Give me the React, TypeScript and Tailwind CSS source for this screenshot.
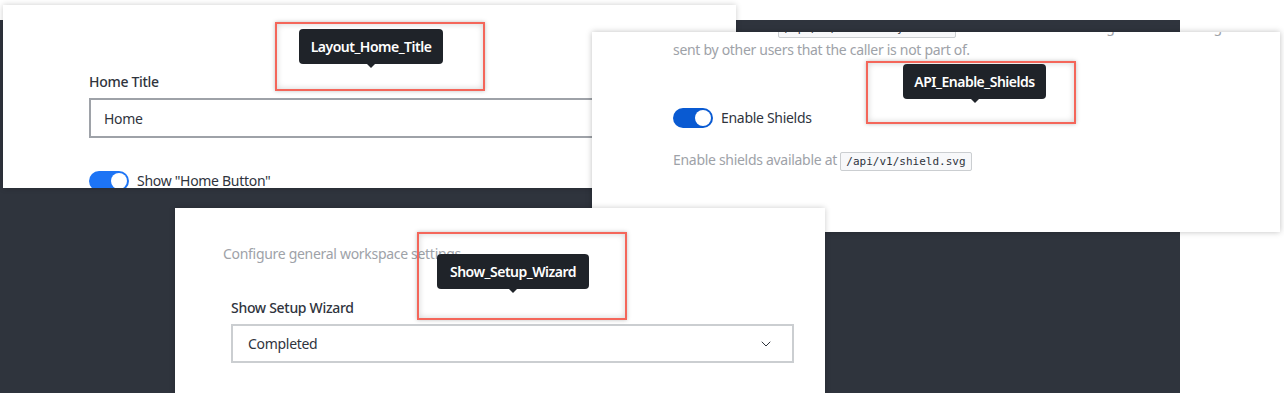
import { ChevronDown } from "lucide-react";

const FONT = "font-['Noto_Sans','Liberation_Sans',sans-serif] tracking-[-0.3px]";

function Toggle({ tone }: { tone: string }) {
  return (
    <span
      className={`flex h-5 w-10 shrink-0 items-center justify-end rounded-full px-[2px] ${tone}`}
    >
      <span className="size-4 rounded-full bg-white" />
    </span>
  );
}

function Code({ children }: { children: string }) {
  return (
    <code className="rounded-[2px] border border-[#cbced1] bg-[#f7f8fa] px-[5px] py-[2px] font-['DejaVu_Sans_Mono',monospace] text-[11px] font-medium tracking-normal text-[#2f343d]">
      {children}
    </code>
  );
}

// red annotation frame with the translation-key tooltip inside it
function KeyTag({
  label,
  className,
  boxClass,
}: {
  label: string;
  className: string;
  boxClass: string;
}) {
  return (
    <div
      className={`absolute w-[210px] border-2 border-[#f4665a] shadow-[0_0_4px_rgba(0,0,0,0.25),inset_0_0_6px_rgba(0,0,0,0.18)] ${className}`}
    >
      <div
        className={`relative flex h-[35px] items-center justify-center rounded-[4px] bg-[#1f2329] text-[14px] font-semibold tracking-[-0.5px] text-white ${boxClass}`}
      >
        {label}
        <span className="absolute -bottom-[4px] left-1/2 size-0 -translate-x-1/2 border-x-[5px] border-t-[5px] border-x-transparent border-t-[#1f2329]" />
      </div>
    </div>
  );
}

export default function App() {
  return (
    <div className={`relative h-[393px] w-[1284px] overflow-hidden bg-white ${FONT}`}>
      {/* dark admin backdrop */}
      <div className="absolute left-0 top-[20px] h-[373px] w-[1180px] bg-[#2f343d]" />

      {/* Card 1 · Layout */}
      <section className="absolute left-[3px] top-[5px] h-[183px] w-[733px] overflow-hidden bg-white shadow-[0_0_6px_rgba(0,0,0,0.2)]">
        <div className="flex flex-col pl-[86px] pt-[67px]">
          <p className="text-[14px] font-medium leading-5 text-[#2f343d]">Home Title</p>
          <div className="mt-[6px] flex h-[40px] w-[580px] items-center border-2 border-[#9ea2a8] px-[13px] text-[14px] text-[#2f343d]">
            Home
          </div>
          <div className="mt-[32px] flex items-center gap-2">
            <Toggle tone="bg-[#1d74f5]" />
            <span className="text-[14px] text-[#2f343d]">Show "Home Button"</span>
          </div>
        </div>
        <KeyTag
          label="Layout_Home_Title"
          className="left-[272px] top-[17px] h-[69px]"
          boxClass="ml-[22px] mt-[5px] w-[144px]"
        />
      </section>

      {/* Card 2 · REST API */}
      <section className="absolute left-[592px] top-[32px] h-[200px] w-[688px] overflow-hidden bg-white shadow-[0_0_6px_rgba(0,0,0,0.25)]">
        <div className="flex flex-col pl-[81px]">
          <p className="-mt-[16px] text-[14px] leading-[21px] text-[#9ea2a8]">
            This enables the <Code>/api/v1/im.history.others</Code> which allows the viewing of direct messages
            <br />
            sent by other users that the caller is not part of.
          </p>
          <div className="mt-[47px] flex items-center gap-2">
            <Toggle tone="bg-[#095ad2]" />
            <span className="text-[14px] text-[#2f343d]">Enable Shields</span>
          </div>
          <p className="mt-[22px] text-[14px] leading-5 text-[#9ea2a8]">
            Enable shields available at <Code>/api/v1/shield.svg</Code>
          </p>
        </div>
        <KeyTag
          label="API_Enable_Shields"
          className="left-[274px] top-[29px] h-[63px]"
          boxClass="ml-[35px] mt-[1px] w-[143px]"
        />
      </section>

      {/* Card 3 · General */}
      <section className="absolute left-[175px] top-[208px] h-[200px] w-[650px] overflow-hidden bg-white shadow-[0_0_6px_rgba(0,0,0,0.2)]">
        <div className="flex flex-col pt-[36px]">
          <p className="pl-[48px] text-[14px] leading-5 text-[#9ea2a8]">
            Configure general workspace settings
          </p>
          <div className="flex flex-col pl-[56px]">
            <p className="mt-[34px] text-[14px] font-medium leading-5 text-[#2f343d]">
              Show Setup Wizard
            </p>
            <div className="mt-[6px] flex h-[39px] w-[563px] items-center justify-between border-2 border-[#cbced1] pl-[15px] pr-[18px] text-[14px] text-[#2f343d]">
              Completed
              <ChevronDown className="size-4 text-[#2f343d]" strokeWidth={1.5} />
            </div>
          </div>
        </div>
        <KeyTag
          label="Show_Setup_Wizard"
          className="left-[242px] top-[24px] h-[88px]"
          boxClass="ml-[18px] mt-[20px] w-[152px]"
        />
      </section>
    </div>
  );
}
